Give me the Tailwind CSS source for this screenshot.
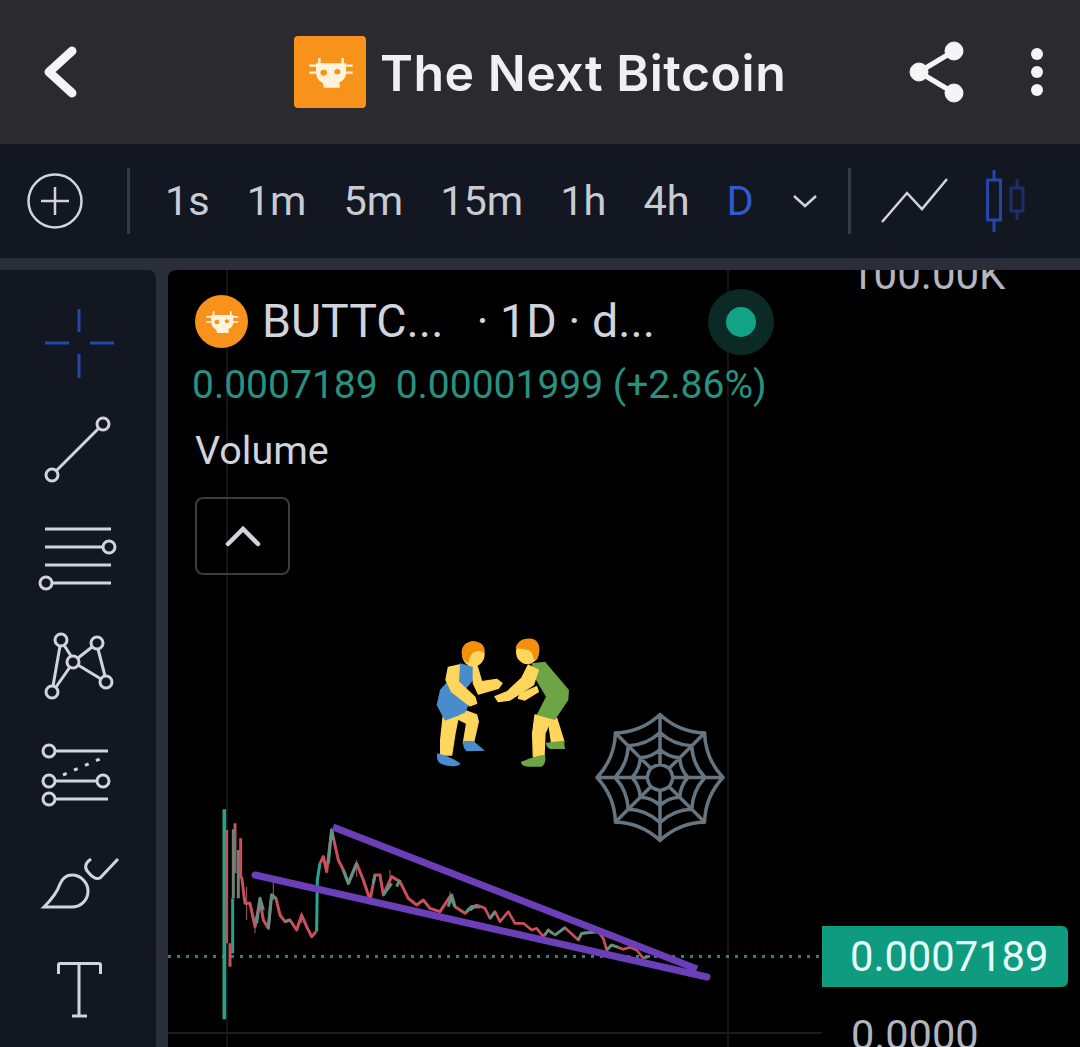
<!DOCTYPE html>
<html lang="en">
<head>
  <meta charset="UTF-8">
  <title>The Next Bitcoin</title>
  <script src="https://cdn.jsdelivr.net/npm/@tailwindcss/browser@4"></script>
</head>
<body class="bg-[#2a2e39] font-['Roboto',sans-serif]">
<div class="w-[1080px] h-[1047px] overflow-hidden flex flex-col">

  <!-- Header -->
  <header class="h-[144px] shrink-0 bg-[#2a2a2f] flex items-center pl-[42px] pr-[36px]">
    <svg class="w-[36px] h-[52px]" viewBox="0 0 36 52" fill="none" stroke="#f5f5f7" stroke-width="9" stroke-linecap="round" stroke-linejoin="round"><path d="M30 5 L7 26 L30 47"/></svg>
    <div class="flex items-center ml-[216px]">
      <svg class="w-[72px] h-[72px] rounded-[4px]" viewBox="0 0 216 216">
        <rect width="216" height="216" fill="#f7931a"/>
        <g transform="translate(-12 -12)">
          <path d="M58 101 H188 M58 122 H188 M88 78 V100 M158 78 V100" stroke="#fff3dc" stroke-width="7" fill="none"/>
          <path d="M78 94 H168 V122 C168 138 158 148 148 150 L150 167 H102 L98 152 C86 148 78 135 78 120 Z" fill="#fff3dc"/>
          <ellipse cx="101" cy="122" rx="10" ry="9" fill="#f7931a"/>
          <ellipse cx="142" cy="119" rx="9" ry="8" fill="#f7931a"/>
        </g>
      </svg>
      <h1 class="ml-[14px] pt-[1px] text-[50px] leading-none font-semibold text-[#f0f0f2] font-['Inter',sans-serif] tracking-[0.5px]">The Next Bitcoin</h1>
    </div>
    <div class="ml-auto flex items-center gap-[65px]">
      <svg class="w-[56px] h-[62px]" viewBox="0 0 56 62" fill="#f5f5f7" stroke="#f5f5f7"><circle cx="10" cy="31" r="9"/><circle cx="45" cy="10" r="9"/><circle cx="45" cy="52" r="9"/><path d="M10 31 L45 10 M10 31 L45 52" stroke-width="5"/></svg>
      <svg class="w-[14px] h-[48px]" viewBox="0 0 14 48" fill="#f5f5f7"><circle cx="7" cy="6" r="6"/><circle cx="7" cy="24" r="6"/><circle cx="7" cy="42" r="6"/></svg>
    </div>
  </header>

  <!-- Timeframe toolbar -->
  <div class="h-[114px] shrink-0 bg-[#131722] flex items-center pl-[27px] text-[41.500px] text-[#c8cbd3]">
    <svg class="w-[56px] h-[56px]" viewBox="0 0 56 56" fill="none" stroke="#d1d4dc" stroke-width="2.5"><circle cx="28" cy="28" r="26.5"/><path d="M28 14 V42 M14 28 H42"/></svg>
    <div class="w-[3px] h-[66px] bg-[#363a45] ml-[44px] mr-[35px]"></div>
    <div class="flex items-center gap-[37px]">
      <span>1s</span>
      <span>1m</span>
      <span>5m</span>
      <span>15m</span>
      <span>1h</span>
      <span>4h</span>
      <span class="text-[#2f5bd0]">D</span>
    </div>
    <svg class="w-[26px] h-[16px] ml-[38px]" viewBox="0 0 26 16" fill="none" stroke="#d1d4dc" stroke-width="2.5"><path d="M2 3 L13 13 L24 3"/></svg>
    <div class="w-[3px] h-[66px] bg-[#363a45] ml-[30px] mr-[30px]"></div>
    <svg class="w-[68px] h-[46px]" viewBox="0 0 68 46" fill="none" stroke="#d1d4dc" stroke-width="2.5"><path d="M1 44 L26 15 L41 31 L66 1"/></svg>
    <svg class="w-[46px] h-[62px] ml-[36px]" viewBox="0 0 46 62" fill="none" stroke="#2447a8" stroke-width="3"><path d="M9 0 V10 M9 50 V62"/><rect x="2.500" y="10" width="13" height="40"/><g stroke="#1c2f6b"><path d="M32 9 V18 M32 41 V50"/><rect x="26" y="18" width="12" height="23"/></g></svg>
  </div>

  <div class="flex-1 flex gap-[12px] pt-[12px] min-h-0">
    <!-- Drawing tools -->
    <aside class="w-[156px] shrink-0 bg-[#131722] rounded-tr-[8px] pt-[18px] flex flex-col overflow-hidden">
      <svg class="w-[156px] h-[109px] shrink-0" viewBox="0 288 156 109" fill="none" stroke="#2447a8" stroke-width="3"><path d="M79 309 V332 M79 354 V378 M45 343 H69 M90 343 H114"/></svg>
      <svg class="w-[156px] h-[109px] shrink-0" viewBox="0 397 156 109" fill="none" stroke="#d1d4dc" stroke-width="3"><path d="M56 471 L99 428"/><circle cx="52" cy="475" r="6"/><circle cx="103" cy="424" r="6"/></svg>
      <svg class="w-[156px] h-[109px] shrink-0" viewBox="0 506 156 109" fill="none" stroke="#d1d4dc" stroke-width="3"><path d="M45 529 H111 M45 547 H103 M45 565 H111 M52 583 H111"/><circle cx="109" cy="547" r="6"/><circle cx="46" cy="583" r="6"/></svg>
      <svg class="w-[156px] h-[109px] shrink-0" viewBox="0 615 156 109" fill="none" stroke="#d1d4dc" stroke-width="3"><path d="M60 646 L53 686 M64 645 L71 656 M56 687 L70 667 M78 658 L92 647 M98 649 L105 676 M78 665 L101 679"/><circle cx="61" cy="640" r="6"/><circle cx="97" cy="643" r="6"/><circle cx="73" cy="662" r="6"/><circle cx="52" cy="692" r="6"/><circle cx="106" cy="682" r="6"/></svg>
      <svg class="w-[156px] h-[109px] shrink-0" viewBox="0 724 156 109" fill="none" stroke="#d1d4dc" stroke-width="3"><path d="M55 751 H108 M55 781 H97 M55 799 H108"/><path d="M63 775 L102 758" stroke-dasharray="4 8"/><circle cx="49" cy="751" r="6"/><circle cx="49" cy="781" r="6"/><circle cx="103" cy="781" r="6"/><circle cx="49" cy="799" r="6"/></svg>
      <svg class="w-[156px] h-[109px] shrink-0" viewBox="0 833 156 109" fill="none" stroke="#d1d4dc" stroke-width="3"><path d="M44 907 C54 897 58 890 60 884 C63 877 68 875 72 875 C81 875 88 883 88 891 C88 900 81 907 72 907 Z"/><path d="M91 859 C85 863 84 868 88 872 C92 877 96 880 100 878 L118 859"/></svg>
      <svg class="w-[156px] h-[109px] shrink-0" viewBox="0 942 156 109" fill="none" stroke="#d1d4dc" stroke-width="3"><path d="M58.500 974 V965 Q58.500 963.500 60 963.500 H99 Q100.500 963.500 100.500 965 V974 M79 963.500 V1016 M72 1016 H87"/></svg>
    </aside>

    <!-- Chart -->
    <main class="relative flex-1 bg-black rounded-tl-[8px] overflow-hidden">
      <svg class="absolute left-0 top-0 w-[912px] h-[777px]" viewBox="168 270 912 777" fill="none">
        <path d="M227 270 V1047 M728 270 V1047" stroke="#141414" stroke-width="2"/>
        <path d="M168 1033 H822" stroke="#1c1c1c" stroke-width="2"/>
        <path d="M168 956.500 H822" stroke="#35806f" stroke-width="3" stroke-dasharray="3 6"/>

        <!-- price series, first part -->
        <g transform="translate(200 800) scale(.3333)" stroke-width="9" stroke-linejoin="round">
          <path d="M73 28 V658" stroke="#2f9e87" stroke-width="11"/>
          <path d="M80 90 V430 M90 430 V500 M105 70 V220 M122 115 V235" stroke="#c9505a"/>
          <path d="M100 88 V295 M115 150 V295" stroke="#6e8078" stroke-width="9"/>
          <path d="M98 295 V460" stroke="#2f9e87"/>
          <path d="M125 230 L135 310 L150 310 L165 380 L180 300 L190 360 L205 385 L215 285 L228 295 L240 345 L255 365 L270 360 L290 390 L305 345 L320 380 L335 410 L348 395" stroke="#c9505a"/>
          <path d="M140 360 V260 M165 400 V350 M220 245 V300 M305 335 V370 M510 315 V280 M570 210 V260 M470 180 V230 M750 275 V310" stroke="#a5605f" stroke-width="3"/>
          <path d="M170 370 L180 295 L190 330 M205 385 L212 310 L215 285 L228 295 M255 365 L270 360" stroke="#5f9083"/>
          <path d="M350 395 L352 240 L360 190" stroke="#2ba58f" stroke-width="9"/>
          <path d="M360 190 L370 170 L380 215 L395 90 L415 180 L430 210 L445 250 L470 190 L490 240 L510 300 L525 225 L540 225 L550 285 L575 230 L600 245 L625 295 L650 315 L670 300 L690 325 L720 335 L750 290 L765 320 L795 340 L815 320 L840 320" stroke="#c9505a"/>
          <path d="M385 190 L395 90 L400 120 M430 210 L445 250 L470 190 M520 250 L525 225 M550 285 L575 250 M590 260 L600 240 M745 320 L755 285 L765 320 M800 335 L815 320 L840 320" stroke="#5a9485"/>
        </g>
        <!-- price series, second part -->
        <g transform="translate(470 860) scale(.3333)" stroke-width="8" stroke-linejoin="round">
          <path d="M0 150 L20 135 L45 145 L60 175 L75 155 L90 185 L115 155 L135 190 L160 190 L185 210 L200 205 L220 230 L235 210 L255 225 L285 203 L325 240 L335 220 L385 215 L400 235 L410 270 L425 255 L460 268 L480 262 L500 270 L520 295" stroke="#c9505a"/>
          <path d="M0 150 L20 135 M60 175 L75 155 M225 225 L235 210 L250 222 M255 225 L285 203 M325 240 L335 220 L385 215 M410 270 L425 255 L445 262 M520 295 L540 288" stroke="#5a9485"/>
        </g>

        <!-- trend lines -->
        <path d="M333 827 L697 969" stroke="#6a3fb8" stroke-width="7"/>
        <path d="M255 875 L707 977" stroke="#6a3fb8" stroke-width="7" stroke-linecap="round"/>

        <!-- wrestlers -->
        <g transform="translate(420 620) scale(.3333)" stroke-linejoin="round">
          <g fill="#ffd65c" stroke="#ffd65c" stroke-width="4">
            <path d="M70 285 L115 290 L105 340 L95 405 L62 405 L62 360 Z"/>
            <path d="M130 270 L170 285 L175 305 L160 370 L130 370 L140 310 L110 295 Z"/>
          </g>
          <path d="M52 400 C75 405 105 418 120 430 C122 442 80 442 60 430 C50 420 50 410 52 400 Z M130 363 L160 363 L195 392 L140 394 C130 385 128 375 130 363 Z" fill="#4a8ccb"/>
          <path d="M120 130 L162 140 L160 180 L130 215 L145 258 L135 278 L75 302 L50 255 L60 210 L95 170 Z" fill="#4a8ccb"/>
          <g fill="#ffd65c" stroke="#ffd65c" stroke-width="4" stroke-linejoin="round">
            <path d="M160 140 L172 140 L185 185 L230 178 L246 190 L235 205 L175 222 L160 190 Z"/>
            <path d="M85 142 L118 135 L115 185 L165 232 L170 250 L150 258 L95 215 L78 180 Z"/>
          </g>
          <ellipse cx="160" cy="102" rx="34" ry="38" fill="#ffd65c"/>
          <path d="M126 105 C120 75 145 62 165 65 C185 66 198 80 193 100 L178 92 C165 95 150 95 146 128 C135 125 128 118 126 105 Z" fill="#f4900c"/>

          <g fill="#ffd65c" stroke="#ffd65c" stroke-width="4">
            <path d="M345 285 L395 295 L375 340 L372 410 L340 410 L338 340 Z"/>
            <path d="M385 300 L410 295 L432 365 L395 370 Z"/>
          </g>
          <path d="M303 425 C320 420 350 405 375 405 C378 420 375 435 365 440 L325 440 C310 440 303 432 303 425 Z M378 368 L432 362 L435 387 L395 387 C385 387 378 378 378 368 Z" fill="#6da544"/>
          <path d="M335 130 L375 125 L447 210 L445 240 L405 300 L350 285 L378 230 L345 175 Z" fill="#6da544"/>
          <g fill="#ffd65c" stroke="#ffd65c" stroke-width="4">
            <path d="M350 200 L355 215 L315 240 L295 235 L300 222 Z"/>
            <path d="M325 135 L355 150 L340 195 L270 240 L235 245 L225 230 L262 215 L305 175 Z"/>
          </g>
          <ellipse cx="322" cy="95" rx="34" ry="38" fill="#ffd65c"/>
          <path d="M287 85 C290 65 310 52 335 56 C358 60 365 85 352 118 C345 122 340 118 338 105 C335 92 325 88 287 85 Z" fill="#f4900c"/>
        </g>

        <!-- spider web -->
        <path id="web" stroke="#66757f" stroke-width="3.500" stroke-linejoin="round" stroke-linecap="round"/>
      </svg>

      <!-- Legend -->
      <div class="absolute left-[27px] top-[25px] w-[620px]">
        <div class="flex items-center h-[53px] text-[#d1d4dc] text-[46.500px] leading-none">
          <svg class="w-[53px] h-[53px] rounded-full" viewBox="0 0 216 216">
            <rect width="216" height="216" fill="#f7931a"/>
            <g transform="translate(-12 -12)">
              <path d="M58 101 H188 M58 122 H188 M88 78 V100 M158 78 V100" stroke="#fff3dc" stroke-width="7" fill="none"/>
              <path d="M78 94 H168 V122 C168 138 158 148 148 150 L150 167 H102 L98 152 C86 148 78 135 78 120 Z" fill="#fff3dc"/>
              <ellipse cx="101" cy="122" rx="10" ry="9" fill="#f7931a"/>
              <ellipse cx="142" cy="119" rx="9" ry="8" fill="#f7931a"/>
            </g>
          </svg>
          <span class="ml-[14px]">BUTTC...</span>
          <span class="ml-[33px]">· 1D · d...</span>
          <span class="ml-[53px] w-[66px] h-[66px] shrink-0 rounded-full bg-[#0c2a25] flex items-center justify-center"><span class="block w-[30px] h-[30px] rounded-full bg-[#12a386]"></span></span>
        </div>
        <div class="mt-[13px] flex text-[#2a9080] text-[39px] leading-[48px] -ml-[3px]">
          <span>0.0007189</span>
          <span class="ml-[18px]">0.00001999 (+2.86%)</span>
        </div>
        <div class="mt-[20px] text-[#d1d4dc] text-[39.500px] leading-[44px]">Volume</div>
        <button class="mt-[24px] w-[95px] h-[78px] rounded-[8px] border-2 border-[#3c3c40] flex items-center justify-center">
          <svg class="w-[36px] h-[22px]" viewBox="0 0 36 22" fill="none" stroke="#d1d4dc" stroke-width="4.500" stroke-linecap="round"><path d="M3 19 L18 4 L33 19"/></svg>
        </button>
      </div>

      <!-- Price axis -->
      <div class="absolute left-[682px] top-[-18px] text-[42px] leading-[46px] text-[#b2b5be]">100.00K</div>
      <div class="absolute left-[654px] top-[656px] w-[246px] h-[61px] bg-[#0f9b80] rounded-r-[6px] flex items-center pl-[28px] pt-[2px] text-[41.700px] text-[#e6fffa]">0.0007189</div>
      <div class="absolute left-[683px] top-[740px] text-[41.500px] leading-[50px] text-[#b2b5be]">0.0000</div>
    </main>
  </div>
</div>

<script>
  // spider web: 8 spokes and 4 rings sagging towards the centre
  const cx = 660, cy = 777.5, rings = [63, 45, 28, 13];
  let d = '';
  for (let i = 0; i < 8; i++) {
    const a = i * Math.PI / 4;
    d += `M${cx + 13 * Math.cos(a)} ${cy + 13 * Math.sin(a)} L${cx + 63 * Math.cos(a)} ${cy + 63 * Math.sin(a)} `;
  }
  rings.forEach(r => {
    for (let i = 0; i < 8; i++) {
      const a = i * Math.PI / 4, b = (i + 1) * Math.PI / 4, m = (a + b) / 2;
      const sag = r > 20 ? r * 0.78 : r;
      const x1 = cx + r * Math.cos(a), y1 = cy + r * Math.sin(a);
      const x2 = cx + r * Math.cos(b), y2 = cy + r * Math.sin(b);
      d += `M${x1} ${y1} Q${cx + sag * Math.cos(m)} ${cy + sag * Math.sin(m)} ${x2} ${y2} `;
    }
  });
  document.getElementById('web').setAttribute('d', d);
</script>
</body>
</html>
